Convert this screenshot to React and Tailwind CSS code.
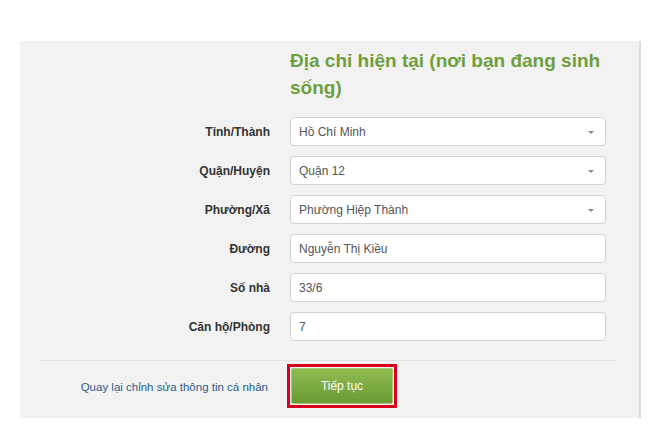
import React from 'react';

const fields = [
  { label: 'Tỉnh/Thành', value: 'Hồ Chí Minh', select: true },
  { label: 'Quận/Huyện', value: 'Quận 12', select: true },
  { label: 'Phường/Xã', value: 'Phường Hiệp Thành', select: true },
  { label: 'Đường', value: 'Nguyễn Thị Kiều' },
  { label: 'Số nhà', value: '33/6' },
  { label: 'Căn hộ/Phòng', value: '7' },
];

function Row({ label, value, select }) {
  return (
    <div className="flex items-center h-[29px]">
      <label className="w-[270px] pr-5 text-right text-[12px] font-bold text-[#333]">
        {label}
      </label>
      <div className="relative w-[316px] h-[29px] bg-white border border-[#d4d4d4] rounded-[4px] flex items-center px-[8px] text-[12px] text-[#555]">
        {value}
        {select && (
          <span className="absolute right-[11px] top-[13px] w-0 h-0 border-l-[3px] border-r-[3px] border-t-[3px] border-l-transparent border-r-transparent border-t-[#888]" />
        )}
      </div>
    </div>
  );
}

export default function App() {
  return (
    <div className="w-[666px] h-[441px] bg-white font-['Liberation_Sans',Arial,sans-serif]">
      <div className="ml-[20px] pt-[41px]">
        <div className="w-[621px] h-[377px] bg-[#f2f2f2] border-r-2 border-[#dcdcdc]">
          {/* tieu de */}
          <h2 className="ml-[270px] pt-[6px] w-[330px] text-[19px] leading-[27px] font-bold text-[#6f9f3c]">
            Địa chỉ hiện tại (nơi bạn đang sinh sống)
          </h2>

          <div className="mt-[16px] flex flex-col gap-[10px]">
            {fields.map((f) => (
              <Row key={f.label} {...f} />
            ))}
          </div>

          <div className="mt-[19px] ml-[19px] mr-[23px] border-t border-[#e2e2e2]" />

          {/* nut */}
          <div className="flex items-center mt-[3px]">
            <div className="w-[267px] pr-[19px] text-right">
              <a href="#" className="text-[11.5px] text-[#2a5d8f]">
                Quay lại chỉnh sửa thông tin cá nhân
              </a>
            </div>
            <div className="border-[3px] border-[#d8001c] p-px">
              <button className="w-[102px] h-[36px] rounded-[2px] border border-[#a5c77a] bg-gradient-to-b from-[#8fbc51] to-[#6b9a35] text-white text-[12px]">
                Tiếp tục
              </button>
            </div>
          </div>
        </div>
      </div>
    </div>
  );
}
